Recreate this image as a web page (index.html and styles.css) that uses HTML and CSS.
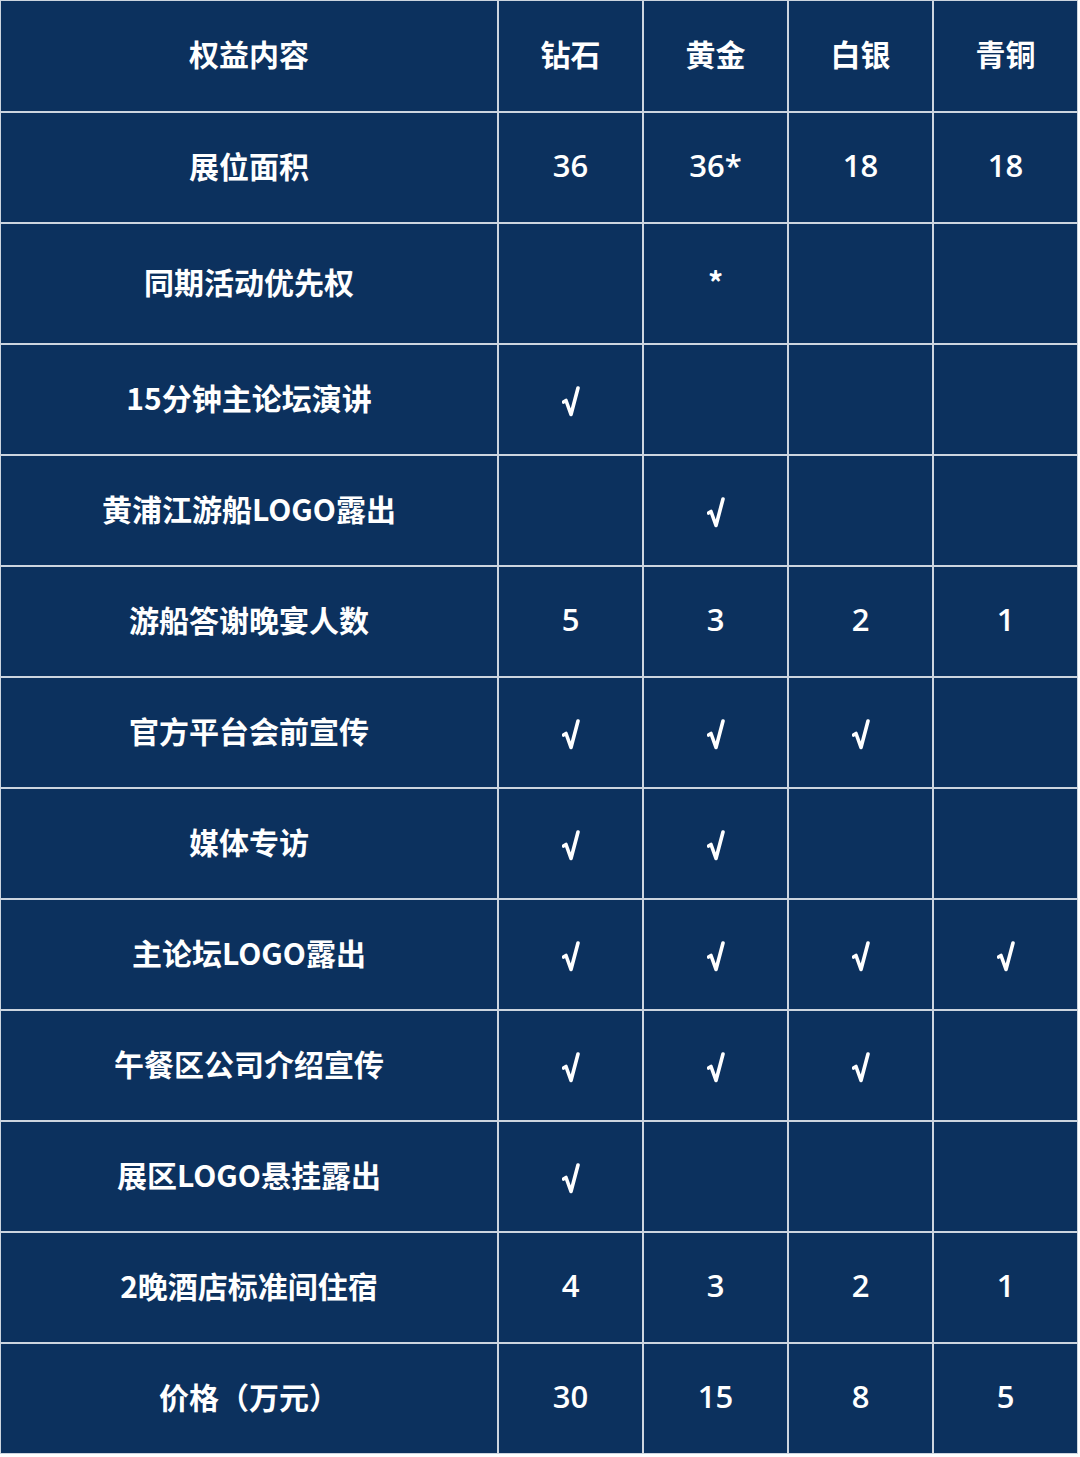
FILE: index.html
```html
<!DOCTYPE html>
<html lang="zh-CN">
<head>
<meta charset="utf-8">
<title>权益内容</title>
<link rel="stylesheet" href="styles.css">
</head>
<body>
<div class="grid">
  <div class="cell head">权益内容</div><div class="cell head">钻石</div><div class="cell head">黄金</div><div class="cell head">白银</div><div class="cell head">青铜</div>

  <div class="cell">展位面积</div><div class="cell num">36</div><div class="cell num">36*</div><div class="cell num">18</div><div class="cell num">18</div>

  <div class="cell tall">同期活动优先权</div><div class="cell tall"></div><div class="cell tall star">*</div><div class="cell tall"></div><div class="cell tall"></div>

  <div class="cell">15分钟主论坛演讲</div><div class="cell chk"><svg class="tick" viewBox="0 0 18 31"><path d="M1.5 16 L4 14.5 L9 28.5 L16 2"/></svg></div><div class="cell"></div><div class="cell"></div><div class="cell"></div>

  <div class="cell">黄浦江游船LOGO露出</div><div class="cell"></div><div class="cell chk"><svg class="tick" viewBox="0 0 18 31"><path d="M1.5 16 L4 14.5 L9 28.5 L16 2"/></svg></div><div class="cell"></div><div class="cell"></div>

  <div class="cell">游船答谢晚宴人数</div><div class="cell num">5</div><div class="cell num">3</div><div class="cell num">2</div><div class="cell num">1</div>

  <div class="cell">官方平台会前宣传</div><div class="cell chk"><svg class="tick" viewBox="0 0 18 31"><path d="M1.5 16 L4 14.5 L9 28.5 L16 2"/></svg></div><div class="cell chk"><svg class="tick" viewBox="0 0 18 31"><path d="M1.5 16 L4 14.5 L9 28.5 L16 2"/></svg></div><div class="cell chk"><svg class="tick" viewBox="0 0 18 31"><path d="M1.5 16 L4 14.5 L9 28.5 L16 2"/></svg></div><div class="cell"></div>

  <div class="cell">媒体专访</div><div class="cell chk"><svg class="tick" viewBox="0 0 18 31"><path d="M1.5 16 L4 14.5 L9 28.5 L16 2"/></svg></div><div class="cell chk"><svg class="tick" viewBox="0 0 18 31"><path d="M1.5 16 L4 14.5 L9 28.5 L16 2"/></svg></div><div class="cell"></div><div class="cell"></div>

  <div class="cell">主论坛LOGO露出</div><div class="cell chk"><svg class="tick" viewBox="0 0 18 31"><path d="M1.5 16 L4 14.5 L9 28.5 L16 2"/></svg></div><div class="cell chk"><svg class="tick" viewBox="0 0 18 31"><path d="M1.5 16 L4 14.5 L9 28.5 L16 2"/></svg></div><div class="cell chk"><svg class="tick" viewBox="0 0 18 31"><path d="M1.5 16 L4 14.5 L9 28.5 L16 2"/></svg></div><div class="cell chk"><svg class="tick" viewBox="0 0 18 31"><path d="M1.5 16 L4 14.5 L9 28.5 L16 2"/></svg></div>

  <div class="cell">午餐区公司介绍宣传</div><div class="cell chk"><svg class="tick" viewBox="0 0 18 31"><path d="M1.5 16 L4 14.5 L9 28.5 L16 2"/></svg></div><div class="cell chk"><svg class="tick" viewBox="0 0 18 31"><path d="M1.5 16 L4 14.5 L9 28.5 L16 2"/></svg></div><div class="cell chk"><svg class="tick" viewBox="0 0 18 31"><path d="M1.5 16 L4 14.5 L9 28.5 L16 2"/></svg></div><div class="cell"></div>

  <div class="cell">展区LOGO悬挂露出</div><div class="cell chk"><svg class="tick" viewBox="0 0 18 31"><path d="M1.5 16 L4 14.5 L9 28.5 L16 2"/></svg></div><div class="cell"></div><div class="cell"></div><div class="cell"></div>

  <div class="cell">2晚酒店标准间住宿</div><div class="cell num">4</div><div class="cell num">3</div><div class="cell num">2</div><div class="cell num">1</div>

  <div class="cell">价格（万元）</div><div class="cell num">30</div><div class="cell num">15</div><div class="cell num">8</div><div class="cell num">5</div>
</div>
</body>
</html>
```

FILE: styles.css
```css
html, body {
  margin: 0;
  padding: 0;
  background: #ffffff;
}

.grid {
  display: grid;
  width: max-content;
  grid-template-columns: 496px 143px 143px 143px 143px;
  grid-template-rows: 110px 109px 119px repeat(10, 109px);
  gap: 2px;
  padding: 1px;
  background: #cdd5df;
  font-family: "Noto Sans CJK SC", "Noto Sans", sans-serif;
  color: #ffffff;
}

.cell {
  background: #0c315e;
  display: flex;
  align-items: center;
  justify-content: center;
  font-size: 30px;
  font-weight: 700;
  line-height: 1;
  padding-bottom: 6px;
  box-sizing: border-box;
}

.num {
  font-family: "Open Sans", "Noto Sans CJK SC", sans-serif;
  font-weight: 600;
  font-size: 31px;
  padding-bottom: 4px;
}

.star {
  align-items: flex-start;
  padding-top: 42px;
  padding-bottom: 0;
}

.chk {
  padding-bottom: 0;
  padding-top: 4px;
}

.tick {
  width: 18px;
  height: 31px;
  fill: none;
  stroke: #ffffff;
  stroke-width: 3.6;
  stroke-linejoin: round;
  stroke-linecap: round;
}
```
